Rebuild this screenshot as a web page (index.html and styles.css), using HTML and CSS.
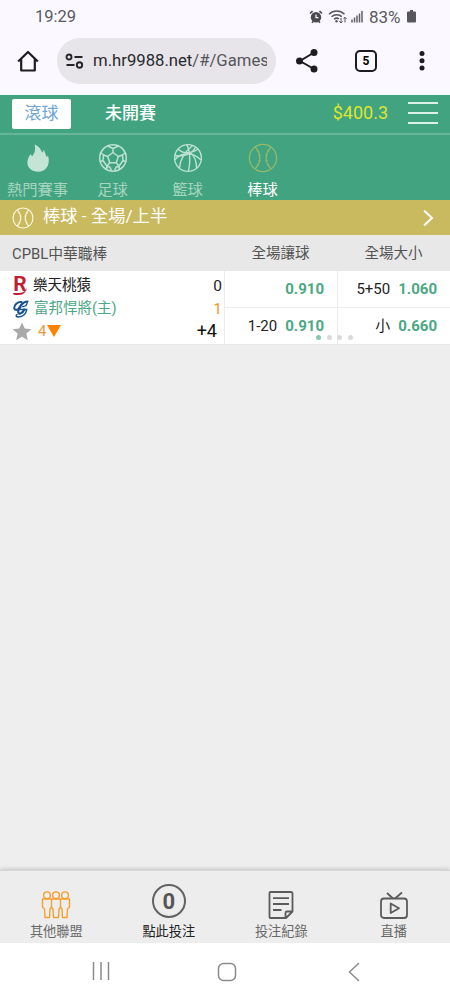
FILE: index.html
```html
<!DOCTYPE html>
<html lang="zh-Hant">
  <head>
    <meta charset="UTF-8" />
    <meta name="viewport" content="width=device-width, initial-scale=1.0" />
    <title>棒球 - 全場/上半</title>
    <link rel="stylesheet" href="styles.css">
  </head>
  <body>
    <div class="phone">
      <div class="status-bar">
        <span class="clock">19:29</span>
        <div class="status-icons">
          <svg width="14" height="14" viewBox="0 0 14 14">
            <circle cx="7" cy="7.3" r="5.2" fill="#4a4a4e" />
            <path d="M1 3.4 3.6 1.2M13 3.4 10.4 1.2M3 12.8l1.4-1.6M11 12.8l-1.4-1.6" stroke="#4a4a4e" stroke-width="1.6" />
            <path d="M7 4.4v3.2h2.4" fill="none" stroke="#fff" stroke-width="1.2" />
          </svg>
          <svg class="wifi" width="20" height="16" viewBox="0 0 20 16">
            <path d="M1 5.200C5.400 1 12 1 16.500 5.200M3.500 7.800c3-2.700 7.300-2.700 10.300-.2M6 10.300c1.500-1.300 3.500-1.400 5-.4" fill="none" stroke="#55555a" stroke-width="1.500" />
            <circle cx="8.500" cy="12.300" r="1.200" fill="#55555a" />
            <path d="M13 9v5m-1.700-1.700L13 14l1.700-1.700M17 13.500V8.300m-1.600 1.600L17 8.300l1.600 1.600" fill="none" stroke="#55555a" />
          </svg>
          <svg width="12" height="13" viewBox="0 0 12 13">
            <path d="M1 12.500v-3M3.500 12.500V7.500M6 12.500v-7M8.500 12.500v-9M11 12.500V1" stroke="#606064" stroke-width="1.500" />
          </svg>
          <span class="percent">83%</span>
          <svg width="9" height="13" viewBox="0 0 9 13">
            <path d="M3 0h3v1.500h2a1 1 0 0 1 1 1V11.500a1 1 0 0 1-1 1H1a1 1 0 0 1-1-1V2.500a1 1 0 0 1 1-1h2z" fill="#58585c" />
          </svg>
        </div>
      </div>

      <div class="browser-bar">
        <svg class="home" width="22" height="22" viewBox="0 0 22 22">
          <path d="M1.200 11.500 11 2l9.800 9.500M4.200 9v11.500h13.600V9" fill="none" stroke="#1d1d21" stroke-width="2.200" stroke-linejoin="round" />
        </svg>
        <div class="url-box">
          <svg width="19" height="16" viewBox="0 0 19 16">
            <g fill="none" stroke="#252529" stroke-width="1.900">
              <circle cx="4" cy="4" r="2.500" />
              <path d="M9.500 4h8M1.500 12h8" />
              <circle cx="14.500" cy="12" r="2.700" />
            </g>
          </svg>
          <div class="url">m.hr9988.net<span>/#/Games</span></div>
        </div>
        <svg class="share" width="24" height="26" viewBox="0 0 24 26">
          <path d="M19 4.500 5 13l14 8" fill="none" stroke="#1d1d21" stroke-width="2" />
          <g fill="#1d1d21">
            <circle cx="19" cy="4.500" r="3.500" />
            <circle cx="4.500" cy="13" r="3.500" />
            <circle cx="19" cy="21" r="3.500" />
          </g>
        </svg>
        <div class="tabs">5</div>
        <svg class="more" width="6" height="22" viewBox="0 0 6 22" fill="#1d1d21">
          <circle cx="3" cy="3.500" r="2.500" />
          <circle cx="3" cy="10.700" r="2.500" />
          <circle cx="3" cy="18" r="2.500" />
        </svg>
      </div>

      <header>
        <div class="top-row">
          <div class="live">滾球</div>
          <div class="upcoming">未開賽</div>
          <div class="balance">$400.3</div>
          <div class="menu"><i></i><i></i><i></i></div>
        </div>
        <nav class="sports">
          <div class="sport">
            <svg width="30" height="30" viewBox="0 0 30 30">
              <path d="M11.500 1.500c4.500 1.800 6.700 5 7.500 8.200 1-.8 1.500-1.800 1.700-3 2 4 1.800 4.800 3 7.300.8-.5 1-1 1.200-1.500 1.800 5 .8 10-2 13-2 2.300-4.800 3.300-7.700 3.300-6.200 0-11-4.100-10.800-9.300.1-4 2-6.600 3.400-8.500l1.200 2.500c2.800-3.500 4-7 2.500-12z" fill="#c4e5d6" />
            </svg>
            <span>熱門賽事</span>
          </div>
          <div class="sport">
            <svg width="30" height="30" viewBox="0 0 30 30">
              <g fill="none" stroke="#bce2d0" stroke-width="1.500" stroke-linejoin="round">
                <circle cx="15" cy="15" r="13.300" />
                <path d="m15 9.500 5.300 4-2 6.200h-6.600l-2-6.200zM15 9.500V5.500M20.300 13.500l4.200-1.500M18.300 19.700l2.700 3.500M11.700 19.700 9 23.200M9.700 13.500 5.500 12M9.500 3l5.500 2.500L20.500 3M27.500 9.500l-3 2.500.5 5.500 3 1.200M25 17.500l-4 5.700.5 3.500M21 23.200l-3 1-1.500 3.500M9 23.200l3 1 1.500 3.500M9 23.200l-.5 3.500M9 23.200l-4-5.700-3 1.200M5 17.500l.5-5.500-3-2.500" />
              </g>
            </svg>
            <span>足球</span>
          </div>
          <div class="sport">
            <svg width="30" height="30" viewBox="0 0 30 30">
              <g fill="none" stroke="#bce2d0" stroke-width="1.400">
                <circle cx="15" cy="15" r="13.400" />
                <path d="M14 1.600C17 9 17.500 19 15.500 28.400M5 6c4.500 4.500 11.500 5.300 20.500 0M2 12.500C11 14.500 20 10 22.500 4M6.500 25C7 17 11 9.500 19.500 2.500M1.700 17C9 8.500 20 9 28 17M23.500 25c0-7-2.500-13-7-16" />
              </g>
            </svg>
            <span>籃球</span>
          </div>
          <div class="sport active">
            <svg width="30" height="30" viewBox="0 0 30 30">
              <g fill="none" stroke="#94b968" stroke-width="1.300">
                <circle cx="15" cy="15" r="13.600" />
                <path d="M7 4c6.500 6.500 6.500 15.500 0 22M23 4c-6.500 6.500-6.500 15.500 0 22" />
                <path d="m8.500 9 2.500-1.500M10 12.500l2.500-.5M10 17.500l2.500.5M8.500 21l2.500 1.500M21.500 9 19 7.500M20 12.500l-2.500-.5M20 17.500l-2.500.5M21.500 21 19 22.500" stroke-width=".7" />
              </g>
            </svg>
            <span>棒球</span>
          </div>
        </nav>
      </header>

      <div class="category">
        <svg width="22" height="22" viewBox="0 0 30 30">
          <g fill="none" stroke="#fff8df" stroke-width="1.600">
            <circle cx="15" cy="15" r="13.600" />
            <path d="M7 4c6.500 6.500 6.500 15.500 0 22M23 4c-6.500 6.500-6.500 15.500 0 22" />
            <path d="m8.500 9 2.500-1.500M10 12.500l2.500-.5M10 17.500l2.500.5M8.500 21l2.500 1.500M21.500 9 19 7.500M20 12.500l-2.500-.5M20 17.500l-2.500.5M21.500 21 19 22.500" stroke-width=".8" />
          </g>
        </svg>
        <span>棒球 - 全場/上半</span>
        <svg class="arrow" width="12" height="18" viewBox="0 0 12 18">
          <path d="m2 1.500 8 7.500-8 7.500" fill="none" stroke="#fff" stroke-width="2" />
        </svg>
      </div>

      <div class="league grid">
        <div class="league-name">CPBL中華職棒</div>
        <div>全場讓球</div>
        <div>全場大小</div>
      </div>

      <div class="match grid">
        <div class="teams">
          <div class="team">
            <div class="logo-r">R</div>
            <span>樂天桃猿</span>
            <b>0</b>
          </div>
          <div class="team home-team">
            <svg width="18" height="20" viewBox="0 0 18 20">
              <g fill="none" stroke="#16528f" stroke-linecap="round">
                <path d="M9.500 3C5.500 2.500 2 6 2.200 9c.3 2.800 4.300 2.300 6.300-.5" stroke-width="2" />
                <path d="M15.500 2.500C11 2.500 6.500 8 6.200 12.500c-.1 3.500 4.300 2.500 6-2" stroke-width="2.200" />
                <path d="M8.700 10.500h6c-.5 4-3.500 7.300-8.200 7.500-2.500 0-3-1.500-1.500-2.300" stroke-width="1.500" />
                <path d="M10.500 7.500c2.500.2 4.300-1.500 4.700-4" stroke-width="1.400" />
              </g>
            </svg>
            <span>富邦悍將(主)</span>
            <b>1</b>
          </div>
          <div class="team inning">
            <svg width="20" height="19" viewBox="0 0 20 19">
              <path d="m10 .5 2.700 6 6.600.7-4.900 4.400 1.400 6.600-5.800-3.400-5.800 3.400 1.400-6.600L.7 7.200l6.600-.7z" fill="#a9a9a9" />
            </svg>
            <span>4</span>
            <svg class="down" width="14" height="12" viewBox="0 0 14 12"><path d="M0 0h14L7 12z" fill="#ff8200" /></svg>
            <b>+4</b>
          </div>
        </div>
        <div class="odds">
          <div><strong>0.910</strong></div>
          <div>1-20<strong>0.910</strong></div>
        </div>
        <div class="odds">
          <div>5+50<strong>1.060</strong></div>
          <div>小<strong>0.660</strong></div>
        </div>
        <div class="dots"><i class="on"></i><i></i><i></i><i></i></div>
      </div>

      <footer>
        <div class="tool">
          <svg width="30" height="30" viewBox="0 0 30 30">
            <g fill="none" stroke="#f4a02f" stroke-width="1.400" stroke-linejoin="round">
              <circle cx="6" cy="5.300" r="3.400" />
              <circle cx="15" cy="5.300" r="3.400" />
              <circle cx="24" cy="5.300" r="3.400" />
              <path d="M1.500 9h27v8l-2 2-.5 8.500h-4.500L21 19l-1.500-2-1.500 2-.5 8.500h-5L12 19l-1.500-2L9 19l-.5 8.500H4L3.500 19l-2-2zM10.500 9v8M19.500 9v8" />
            </g>
          </svg>
          <span>其他聯盟</span>
        </div>
        <div class="tool bet">
          <div class="count">0</div>
          <span>點此投注</span>
        </div>
        <div class="tool">
          <svg width="30" height="30" viewBox="0 0 30 30">
            <g fill="none" stroke="#5b5b5b" stroke-width="1.800" stroke-linejoin="round">
              <path d="M4.500 2H25a1.500 1.500 0 0 1 1.500 1.500v18L20 28H4.500a1 1 0 0 1-1-1V3a1 1 0 0 1 1-1zM26.500 21.500H21a1.500 1.500 0 0 0-1.500 1.500v5M7 8.200h16M7 14h16M7 20h8.500" />
            </g>
          </svg>
          <span>投注紀錄</span>
        </div>
        <div class="tool">
          <svg width="30" height="30" viewBox="0 0 30 30">
            <g fill="none" stroke="#5b5b5b" stroke-width="1.800" stroke-linejoin="round">
              <rect x="2" y="8.500" width="26" height="19.500" rx="3" />
              <path d="m8 3 6 5.500M23 2.500l-7 6M11.700 13.500v9.500l8.300-4.700z" />
            </g>
          </svg>
          <span>直播</span>
        </div>
      </footer>

      <div class="system-nav">
        <svg width="18" height="18" viewBox="0 0 18 18">
          <path d="M1.500 0v18M9 0v18M16.500 0v18" stroke="#8b8b8b" stroke-width="1.500" />
        </svg>
        <svg class="nav-home" width="20" height="20" viewBox="0 0 20 20">
          <rect x="1.500" y="1.500" width="17" height="17" rx="5" fill="none" stroke="#8b8b8b" stroke-width="1.500" />
        </svg>
        <svg width="12" height="20" viewBox="0 0 12 20">
          <path d="m11 1-9.500 9 9.500 9" fill="none" stroke="#8b8b8b" stroke-width="1.500" />
        </svg>
      </div>
    </div>
  </body>
</html>
```

FILE: styles.css
```css
* {
  box-sizing: border-box;
}
body {
  margin: 0;
  font-family: Roboto, "Noto Sans CJK TC", sans-serif;
  background-color: #eee;
}
svg {
  display: block;
  flex-shrink: 0;
}
.phone {
  display: flex;
  flex-direction: column;
  width: 450px;
  height: 1000px;
  overflow: hidden;
}

/* phone status and browser bar */
.status-bar {
  display: flex;
  justify-content: space-between;
  align-items: center;
  height: 33px;
  padding: 0 34px 0 35px;
  background-color: #fbf9ff;
  color: #59595e;
  font-size: 17px;
}
.clock {
  font-size: 16.5px;
}
.status-icons {
  display: flex;
  align-items: center;
  gap: 3px;
}
.wifi {
  margin-left: 2px;
}
.percent {
  width: 35px;
  margin-left: 3px;
}
.browser-bar {
  display: flex;
  align-items: center;
  height: 62px;
  padding: 0 25px 4px 17px;
  background-color: #fbf9ff;
  border-bottom: 2px solid #f2fcfb;
}
.url-box {
  display: flex;
  align-items: center;
  width: 219px;
  height: 46px;
  margin-left: 18px;
  padding-left: 8px;
  border-radius: 23px;
  background-color: #e7e5ea;
}
.url {
  width: 174px;
  margin-left: 9px;
  overflow: hidden;
  white-space: nowrap;
  font-size: 16.7px;
  line-height: 22px;
  color: #29292d;
}
.url span {
  color: #55555a;
}
.share {
  margin-left: 19px;
}
.tabs {
  width: 22px;
  height: 22px;
  margin-left: 36px;
  border: 2px solid #1d1d21;
  border-radius: 5px;
  font-size: 12px;
  font-weight: bold;
  line-height: 18px;
  text-align: center;
}
.more {
  margin-left: 42px;
}

/* green header */
header {
  height: 105px;
  background-color: #41a380;
  color: #fff;
}
.top-row {
  display: flex;
  height: 40px;
  padding: 4px 12px 0;
  border-bottom: 2px solid #68b698;
}
.live {
  width: 59px;
  height: 30px;
  border-radius: 2px;
  background-color: #fff;
  color: #6fa5d5;
  font-size: 17px;
  line-height: 29px;
  text-align: center;
}
.upcoming {
  margin-left: 34px;
  font-size: 17px;
  font-weight: 500;
  line-height: 29px;
}
.balance {
  margin-left: auto;
  font-size: 18px;
  line-height: 28px;
  color: #dfe52e;
}
.menu {
  display: flex;
  flex-direction: column;
  gap: 8px;
  width: 30px;
  margin-left: 20px;
  padding-top: 3px;
}
.menu i {
  height: 2px;
  background-color: #d9f1e6;
}
.sports {
  display: flex;
}
.sport {
  display: flex;
  flex-direction: column;
  align-items: center;
  width: 75px;
  padding-top: 8px;
  color: #a6d5bf;
  font-size: 15.3px;
  line-height: 22px;
}
.sport span {
  margin-top: 6px;
  white-space: nowrap;
}
.sport.active {
  color: #fff;
}

.category {
  display: flex;
  align-items: center;
  height: 35px;
  padding: 0 16px 0 12px;
  background-color: #c9b95f;
  color: #fff;
  font-size: 17.3px;
  line-height: 24px;
}
.category span {
  margin: -3px 0 0 9px;
}
.arrow {
  margin-left: auto;
}

/* odds table */
.grid {
  display: grid;
  grid-template-columns: 224px 113px 113px;
}
.league {
  height: 36px;
  background-color: #e8e8e8;
  color: #535353;
  font-size: 14.5px;
  line-height: 38px;
  text-align: center;
}
.league-name {
  padding-left: 12px;
  font-size: 14.8px;
  text-align: left;
}
.match {
  position: relative;
  height: 74px;
  background-color: #fff;
  border-bottom: 1px solid #e8e8e8;
}
.teams {
  padding: 3px 2px 0 12px;
}
.team {
  display: flex;
  align-items: center;
  height: 23px;
  font-size: 14.5px;
  line-height: 22px;
  color: #222;
}
.team span {
  margin-left: 4px;
}
.team b {
  margin-left: auto;
  font-size: 15.5px;
  font-weight: normal;
}
.logo-r {
  width: 14px;
  height: 19px;
  margin: 0 2px 0 1px;
  border-bottom: 2px solid #bd1f35;
  border-radius: 0 0 8px 2px;
  color: #bd1f35;
  font-size: 21px;
  font-weight: bold;
  line-height: 17px;
  text-align: center;
}
.home-team span {
  color: #4ba784;
}
.home-team b {
  color: #f49325;
}
.inning {
  height: 22px;
}
.inning span {
  margin-left: 6px;
  font-size: 15px;
  color: #e99a3a;
}
.down {
  margin-left: 1px;
}
.inning b {
  margin-right: 5px;
  font-size: 18px;
  color: #111;
}
.odds {
  border-left: 1px solid #ededed;
}
.odds div {
  display: flex;
  justify-content: flex-end;
  align-items: center;
  height: 36px;
  padding-right: 13px;
  font-size: 15px;
  line-height: 20px;
  color: #222;
}
.odds div + div {
  height: 37px;
  border-top: 1px solid #ededed;
}
.odds strong {
  margin-left: 8px;
  color: #4ba784;
}
.dots {
  position: absolute;
  top: 64px;
  left: 316px;
  display: flex;
  gap: 5.5px;
}
.dots i {
  width: 5px;
  height: 5px;
  border-radius: 50%;
  background-color: #dadada;
}
.dots .on {
  background-color: #85c9af;
}

/* bottom bars */
footer {
  display: flex;
  height: 73px;
  margin-top: auto;
  background-color: #ededed;
  border-top: 1px solid #d5d5d5;
  box-shadow: 0 -1px 4px rgba(0, 0, 0, 0.18);
}
.tool {
  display: flex;
  flex-direction: column;
  justify-content: flex-end;
  align-items: center;
  width: 112.5px;
  padding-bottom: 1px;
  color: #696969;
  font-size: 13.2px;
  line-height: 20px;
}
.tool span {
  margin-top: 2px;
}
.bet {
  color: #222;
}
.bet span {
  margin-top: 4px;
}
.count {
  width: 34px;
  height: 34px;
  border: 2px solid #626262;
  border-radius: 50%;
  color: #555;
  font-size: 22px;
  font-weight: bold;
  line-height: 31px;
  text-align: center;
}
.system-nav {
  display: flex;
  justify-content: space-between;
  height: 57px;
  padding: 19px 90px 0 92px;
  background-color: #fff;
}
.nav-home {
  margin-right: 4px;
}
```
